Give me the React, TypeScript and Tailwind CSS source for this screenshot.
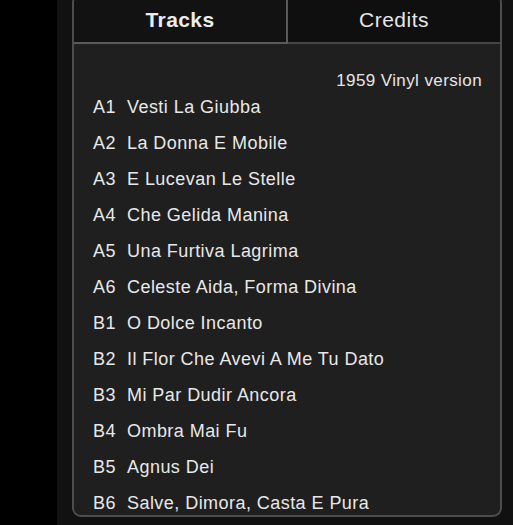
import React from "react";

const tracks: [string, string][] = [
  ["A1", "Vesti La Giubba"],
  ["A2", "La Donna E Mobile"],
  ["A3", "E Lucevan Le Stelle"],
  ["A4", "Che Gelida Manina"],
  ["A5", "Una Furtiva Lagrima"],
  ["A6", "Celeste Aida, Forma Divina"],
  ["B1", "O Dolce Incanto"],
  ["B2", "Il Flor Che Avevi A Me Tu Dato"],
  ["B3", "Mi Par Dudir Ancora"],
  ["B4", "Ombra Mai Fu"],
  ["B5", "Agnus Dei"],
  ["B6", "Salve, Dimora, Casta E Pura"],
];

export default function App() {
  return (
    <div
      className="flex h-[525px] w-[513px] overflow-hidden bg-black"
      style={{ fontFamily: '"Liberation Sans", Arial, sans-serif' }}
    >
      <div className="ml-[57px] flex-1 bg-[#111111] pl-[15px] pr-[11px]">
        <div className="mt-[-6px] flex h-[523px] flex-col overflow-hidden rounded-[9px] border-2 border-[#4d4d4d] bg-[#1f1f1f]">
          <div className="flex h-[48px] shrink-0">
            <div className="flex w-[214px] items-center justify-center border-r-2 border-b-2 border-[#5a5a5a] bg-[#121212] pt-[1px] text-[21px] font-bold tracking-[0.4px] text-[#ececec]">
              Tracks
            </div>
            <div className="flex flex-1 items-center justify-center border-b-2 border-[#444444] bg-[#0f0f0f] pt-[1px] text-[21px] tracking-[0.5px] text-[#e6e6e6]">
              Credits
            </div>
          </div>
          <div className="flex flex-col pt-[26px]">
            <div className="flex h-[21px] justify-end pr-[18px] text-[17px] leading-[21px] tracking-[0.4px] text-[#e6e6e6]">
              1959 Vinyl version
            </div>
            <div className="flex flex-col pl-[19px]">
              {tracks.map(([code, title]) => (
                <div
                  key={code}
                  className="flex h-[36px] items-center text-[18px] tracking-[0.45px] text-[#e8e8e8] first:-mt-[2px]"
                >
                  <span className="w-[34px]">{code}</span>
                  <span>{title}</span>
                </div>
              ))}
            </div>
          </div>
        </div>
      </div>
    </div>
  );
}
